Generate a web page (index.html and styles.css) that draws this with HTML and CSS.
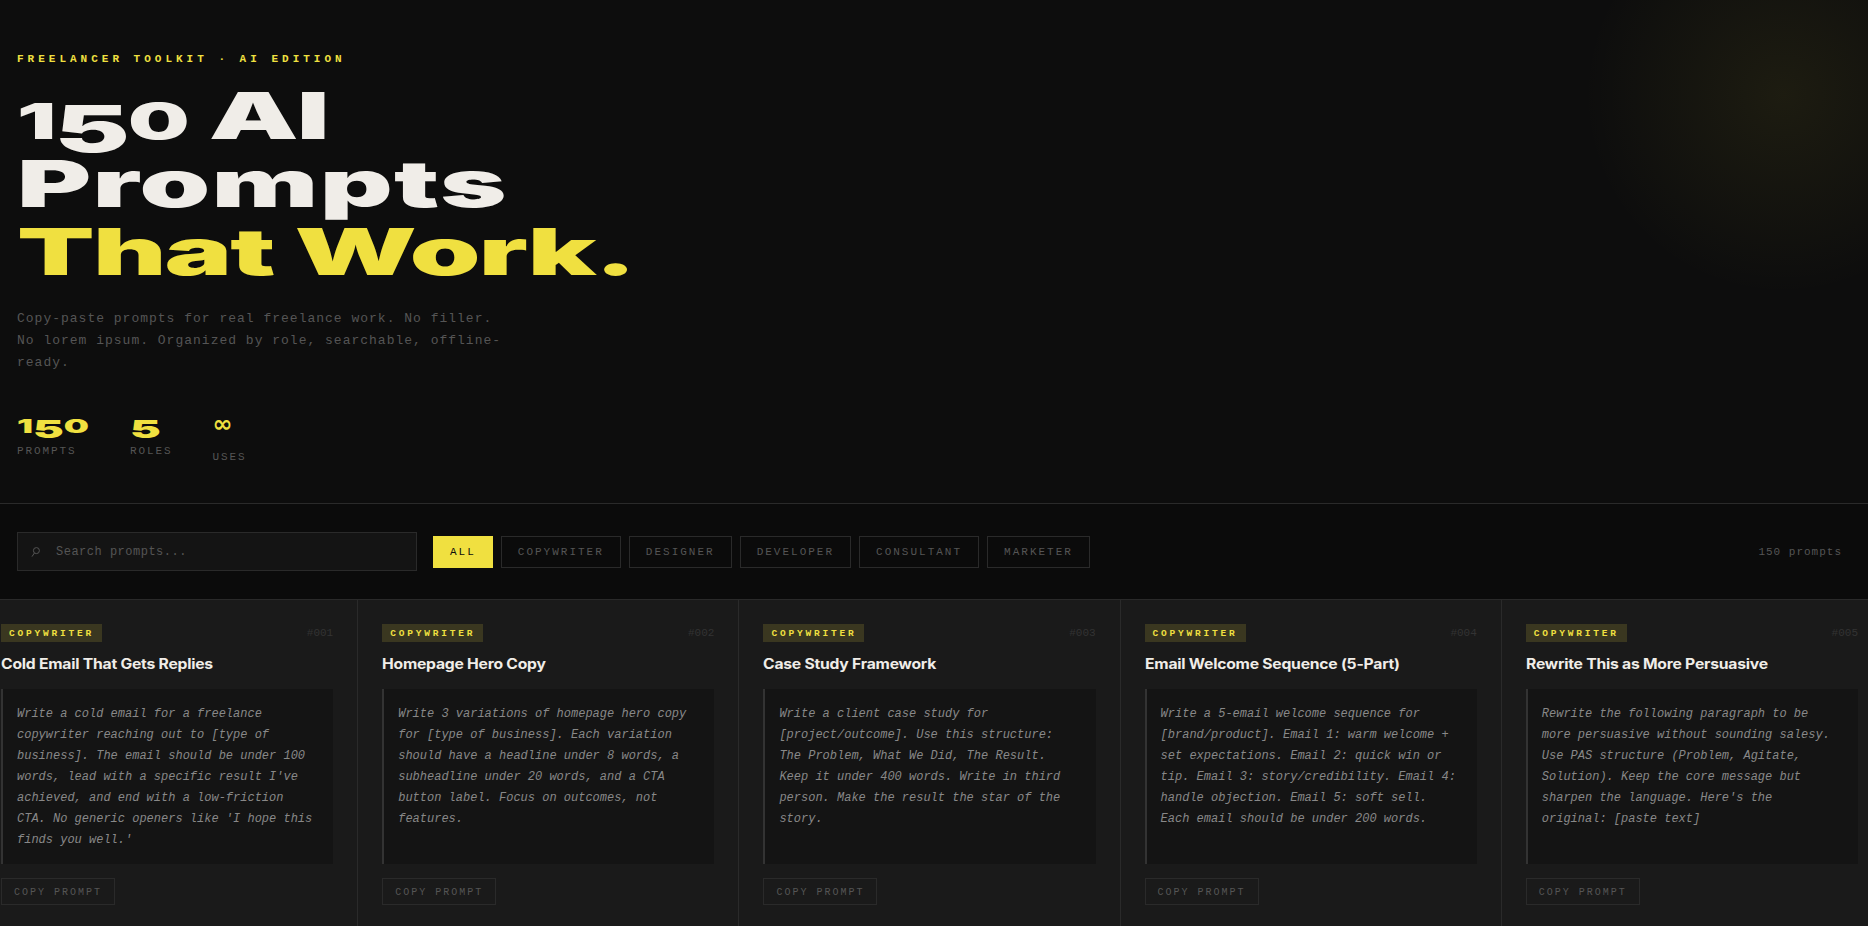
FILE: index.html
```html
<!DOCTYPE html>
<html lang="en">
<head>
    <meta charset="UTF-8">
    <meta name="viewport" content="width=device-width, initial-scale=1.0">
    <title>150 AI Prompts That Work</title>
    <link rel="stylesheet" href="styles.css">
</head>
<body>
<header class="hero">
    <p class="eyebrow">FREELANCER TOOLKIT · AI EDITION</p>
    <h1 class="headline">
        <span class="line"><span class="low">1</span><span class="drop">5</span><span class="low">0</span> AI</span>
        <span class="line wide">Prompts</span>
        <span class="line accent">That Work.</span>
    </h1>
    <p class="sub">Copy-paste prompts for real freelance work. No filler. No lorem ipsum. Organized by role, searchable, offline-ready.</p>
    <div class="stats">
        <div class="stat stat-prompts">
            <div class="stat-num"><span class="low">1</span><span class="drop">5</span><span class="low">0</span></div>
            <div class="stat-label">PROMPTS</div>
        </div>
        <div class="stat">
            <div class="stat-num"><span class="drop">5</span></div>
            <div class="stat-label">ROLES</div>
        </div>
        <div class="stat">
            <div class="stat-num inf">∞</div>
            <div class="stat-label">USES</div>
        </div>
    </div>
</header>

<div class="toolbar">
    <label class="search">
        <svg class="search-icon" viewBox="0 0 9 10" width="9" height="10" aria-hidden="true">
            <circle cx="5.4" cy="3.6" r="3"></circle>
            <line x1="3.4" y1="6" x2="1" y2="9.6"></line>
        </svg>
        <input type="text" placeholder="Search prompts...">
    </label>
    <div class="filters">
        <button class="filter active">ALL</button>
        <button class="filter">COPYWRITER</button>
        <button class="filter">DESIGNER</button>
        <button class="filter">DEVELOPER</button>
        <button class="filter">CONSULTANT</button>
        <button class="filter">MARKETER</button>
    </div>
    <span class="count">150 prompts</span>
</div>

<main class="grid">
    <article class="card">
        <div class="card-top"><span class="tag">COPYWRITER</span><span class="num">#001</span></div>
        <h3 class="card-title">Cold Email That Gets Replies</h3>
        <p class="prompt">Write a cold email for a freelance copywriter reaching out to [type of business]. The email should be under 100 words, lead with a specific result I've achieved, and end with a low-friction CTA. No generic openers like 'I hope this finds you well.'</p>
        <button class="copy">COPY PROMPT</button>
    </article>
    <article class="card">
        <div class="card-top"><span class="tag">COPYWRITER</span><span class="num">#002</span></div>
        <h3 class="card-title">Homepage Hero Copy</h3>
        <p class="prompt">Write 3 variations of homepage hero copy for [type of business]. Each variation should have a headline under 8 words, a subheadline under 20 words, and a CTA button label. Focus on outcomes, not features.</p>
        <button class="copy">COPY PROMPT</button>
    </article>
    <article class="card">
        <div class="card-top"><span class="tag">COPYWRITER</span><span class="num">#003</span></div>
        <h3 class="card-title">Case Study Framework</h3>
        <p class="prompt">Write a client case study for [project/outcome]. Use this structure: The Problem, What We Did, The Result. Keep it under 400 words. Write in third person. Make the result the star of the story.</p>
        <button class="copy">COPY PROMPT</button>
    </article>
    <article class="card">
        <div class="card-top"><span class="tag">COPYWRITER</span><span class="num">#004</span></div>
        <h3 class="card-title">Email Welcome Sequence (5-Part)</h3>
        <p class="prompt">Write a 5-email welcome sequence for [brand/product]. Email 1: warm welcome + set expectations. Email 2: quick win or tip. Email 3: story/credibility. Email 4: handle objection. Email 5: soft sell. Each email should be under 200 words.</p>
        <button class="copy">COPY PROMPT</button>
    </article>
    <article class="card">
        <div class="card-top"><span class="tag">COPYWRITER</span><span class="num">#005</span></div>
        <h3 class="card-title">Rewrite This as More Persuasive</h3>
        <p class="prompt">Rewrite the following paragraph to be more persuasive without sounding salesy. Use PAS structure (Problem, Agitate, Solution). Keep the core message but sharpen the language. Here's the original: [paste text]</p>
        <button class="copy">COPY PROMPT</button>
    </article>
</main>
</body>
</html>
```

FILE: styles.css
```css
html, body { margin: 0; padding: 0; height: 100%; overflow: hidden; }
body { background: #0d0d0d; color: #f0ede8; font-family: "Liberation Mono", monospace; }
p, h1, h3 { margin: 0; }
button { font-family: inherit; cursor: pointer; background: none; }

/* hero */
.hero { height: 504px; box-sizing: border-box; padding: 52px 17px 0; border-bottom: 1px solid #2a2a2a; background: radial-gradient(circle 200px at 1783px 95px, rgba(240, 224, 64, 0.07) 0%, transparent 100%); }
.eyebrow { font-size: 11px; line-height: 14px; letter-spacing: 4px; color: #f0e040; font-weight: bold; margin-bottom: 16px; }
.headline { font-family: Inter, sans-serif; font-weight: 900; font-size: 65px; line-height: 68px; letter-spacing: -1px; transform: scaleX(1.74); transform-origin: left; width: max-content; }
.line { display: block; }
.wide { letter-spacing: 0.8px; }
.accent { color: #f0e040; }
.low { font-size: 0.766em; line-height: 0; }
.drop { vertical-align: -0.2em; line-height: 0; }
.sub { margin-top: 22px; width: 490px; font-size: 13px; line-height: 22px; letter-spacing: 1px; color: #555; }
.stats { display: flex; gap: 40px; margin-top: 36px; }
.stat-prompts { min-width: 73px; }
.stat-num { font-family: Inter, sans-serif; font-weight: 900; font-size: 25px; line-height: 28px; color: #f0e040; transform: scaleX(1.85); transform-origin: left; }
.stat-num.inf { font-family: "DejaVu Sans", sans-serif; font-weight: bold; font-size: 24px; padding-bottom: 6px; transform: none; }
.stat-label { margin-top: 6px; font-size: 11px; line-height: 14px; letter-spacing: 1.9px; color: #555; }

/* search + filters */
.toolbar { display: flex; align-items: center; gap: 16px; height: 96px; box-sizing: border-box; padding: 0 26px 0 17px; background: #0b0b0b; border-bottom: 1px solid #2a2a2a; }
.search { display: flex; align-items: center; gap: 16px; width: 400px; height: 39px; box-sizing: border-box; padding-left: 13px; background: #141414; border: 1px solid #2a2a2a; }
.search-icon { flex: none; fill: none; stroke: #555; stroke-width: 1; }
.search input { flex: 1; min-width: 0; border: 0; outline: 0; padding: 0; background: none; color: #f0ede8; font-family: inherit; font-size: 12px; letter-spacing: 0.5px; }
.search input::placeholder { color: #555; opacity: 1; }
.filters { display: flex; gap: 8px; }
.filter { height: 32px; box-sizing: border-box; padding: 0 16px; border: 1px solid #2a2a2a; color: #555; font-size: 11px; letter-spacing: 2px; }
.filter.active { background: #f0e040; border-color: #f0e040; color: #0d0d0d; }
.count { margin-left: auto; font-size: 11px; letter-spacing: 1px; color: #555; }

/* cards */
.grid { display: grid; grid-template-columns: repeat(5, 1fr); width: 1906px; margin-left: -23px; background: #1a1a1a; }
.card { display: flex; flex-direction: column; align-items: flex-start; box-sizing: border-box; padding: 24px; border-right: 1px solid #2a2a2a; }
.card-top { display: flex; justify-content: space-between; align-items: center; align-self: stretch; margin-bottom: 13px; }
.tag { height: 18px; box-sizing: border-box; padding: 0 8px; background: rgba(240, 224, 64, 0.15); color: #f0e040; font-size: 9.5px; font-weight: bold; line-height: 19px; letter-spacing: 2.8px; }
.num { font-size: 11px; color: #333; }
.card-title { font-family: Inter, sans-serif; font-weight: 700; font-size: 14px; line-height: 18px; color: #f0ede8; letter-spacing: -0.2px; transform: scaleX(1.12); transform-origin: left; margin-bottom: 16px; }
.prompt { flex: 1; align-self: stretch; padding: 15px 14px 13px; background: #141414; border-left: 2px solid #333; font-size: 12px; line-height: 21px; font-style: italic; color: #888; margin-bottom: 14px; }
.copy { height: 27px; box-sizing: border-box; padding: 1px 12px 0; border: 1px solid #2a2a2a; color: #555; font-size: 10px; letter-spacing: 2px; }
```
